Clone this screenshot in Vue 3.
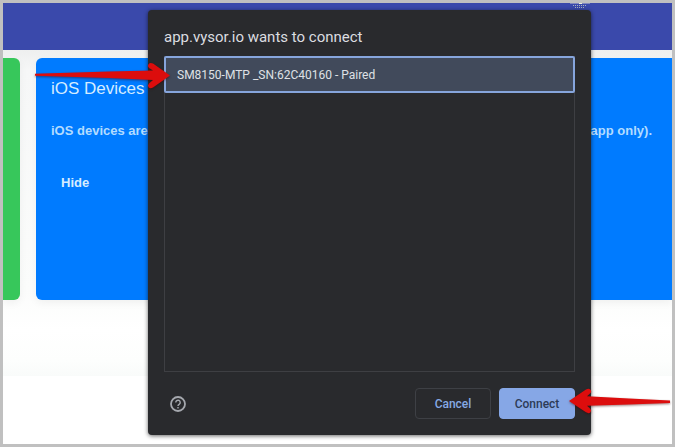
<script setup>
import { ref } from 'vue'

const devices = ref([{ id: 1, label: 'SM8150-MTP _SN:62C40160 - Paired' }])
const selected = ref(1)
</script>

<template>
  <div class="frame">
    <header class="topbar"></header>
    <main class="cards">
      <section class="card card-green"></section>
      <section class="card card-blue">
        <h2>iOS Devices</h2>
        <p><span>iOS devices are</span><span>app only).</span></p>
        <button type="button" class="hide">Hide</button>
      </section>
    </main>
    <div class="footer"></div>

    <svg class="spark" viewBox="0 0 20 6" aria-hidden="true">
      <path d="M0 .5H20" stroke="#8389bd" />
      <path d="M3 2.5H17M5 4.5H15" stroke="#a9b1bd" stroke-dasharray="1 1" />
      <path d="M9 .5h3" stroke="#eef0da" />
    </svg>

    <div class="dialog" role="dialog" aria-labelledby="dialog-title">
      <h1 id="dialog-title">app.vysor.io wants to connect</h1>
      <div class="list">
        <button
          v-for="d in devices"
          :key="d.id"
          type="button"
          class="device"
          :class="{ selected: d.id === selected }"
          @click="selected = d.id"
        >{{ d.label }}</button>
      </div>
      <div class="actions">
        <button type="button" class="help" aria-label="Help">
          <svg viewBox="0 0 16 16" fill="none" stroke="#a5a8ae">
            <circle cx="8" cy="8" r="7" stroke-width="1.8" />
            <path d="M5.8 6.5a2.2 2.2 0 1 1 3.5 1.7C8.5 8.8 8 9.1 8 10" stroke-width="1.4" />
            <path d="M8 11.1v1.4" stroke-width="1.4" />
          </svg>
        </button>
        <button type="button" class="btn cancel">Cancel</button>
        <button type="button" class="btn connect">Connect</button>
      </div>
    </div>

    <svg class="arrow arrow-left" viewBox="0 0 136 28" aria-hidden="true">
      <path d="M1 12.7 75 10.5 119 9.500 115 7Q113 5 114.5 3.2Q116 1.200 119 2.500L136 14.5 119 26.500Q116 28 114.5 26.200Q113 24.5 115 22.5L119 19 75 17 1 14.8Z" />
    </svg>
    <svg class="arrow arrow-right" viewBox="0 0 102 28" aria-hidden="true">
      <path d="M0 14 17 2.500Q20 1 21.5 2.8Q23 5 21 6.5L18 9.200 60 11.500 101 13.5V16L60 17.500 18 18.700 21 21.5Q23 23.500 21.5 25.200Q20 27 17 25.300Z" />
    </svg>
  </div>
</template>

<style>
body {
  background: #fff;
}
</style>

<style scoped>
.frame {
  position: relative;
  box-sizing: border-box;
  min-height: 100vh;
  display: flex;
  flex-direction: column;
  border: 3px solid #c0c0c0;
  overflow: hidden;
  font-family: "Liberation Sans", Arial, sans-serif;
}
button {
  font: inherit;
  margin: 0;
  padding: 0;
  border: 0;
  background: none;
  cursor: pointer;
}
.topbar {
  height: 47px;
  background: #3a49ab;
}
.cards {
  display: flex;
  gap: 16px;
  padding: 8px 0 76px;
  background: linear-gradient(#eeefef, #f6f7f7 20px, #fbfcfb 240px, #fff 280px, #fdfefd 310px, #f9fbfa);
}
.card {
  box-sizing: border-box;
  min-height: 242px;
  box-shadow: 0 3px 8px rgba(0, 0, 0, 0.05);
}
.card-green {
  width: 17px;
  background: #37c75b;
  border-radius: 0 6px 6px 0;
}
.card-blue {
  flex: 1;
  padding: 21px 20px 16px 15px;
  background: #007bff;
  border-radius: 6px 0 0 6px;
  color: #b3dcff;
}
h2 {
  margin: 0;
  font-size: 17px;
  line-height: 20px;
  font-weight: 400;
  color: #d5ecff;
}
.card-blue p {
  display: flex;
  justify-content: space-between;
  margin: 24px 0 0;
  font-size: 13px;
  line-height: 16px;
  font-weight: 700;
}
.hide {
  display: block;
  margin: 36px 0 0 10px;
  font-size: 13px;
  line-height: 16px;
  font-weight: 700;
  color: #d5ecff;
}
.footer {
  flex: 1;
  background: #fff;
}
.spark {
  position: absolute;
  top: 0;
  right: 82px;
  width: 20px;
  height: 6px;
}
.dialog {
  position: absolute;
  top: 7px;
  right: 81px;
  bottom: 9px;
  left: 145px;
  box-sizing: border-box;
  display: flex;
  flex-direction: column;
  padding: 16px;
  border-radius: 4px;
  background: #292a2d;
  box-shadow: 0 1px 4px rgba(0, 0, 0, 0.6);
  font-family: Roboto, sans-serif;
}
h1 {
  margin: 0 0 8px;
  font-size: 15px;
  line-height: 22px;
  font-weight: 400;
  color: #dcdde0;
}
.list {
  flex: 1;
  display: flex;
  flex-direction: column;
  border: 1px solid #3e3f43;
  border-top: 0;
}
.device {
  height: 37px;
  margin: 0 -1px;
  padding: 0 11px;
  border: 2px solid #292a2d;
  border-radius: 2px;
  font-size: 12px;
  text-align: left;
  color: #dfe1e5;
}
.device.selected {
  background: #414a5b;
  border-color: #86a5dc;
}
.actions {
  display: flex;
  align-items: center;
  gap: 8px;
  margin-top: 16px;
}
.help {
  width: 16px;
  height: 16px;
  margin: 0 auto 0 6px;
}
.help svg {
  display: block;
}
.btn {
  box-sizing: border-box;
  width: 76px;
  height: 31px;
  border: 1px solid #3e4045;
  border-radius: 4px;
  font-size: 12px;
  font-weight: 500;
  color: #86a9e4;
}
.connect {
  background: #86a7e6;
  border-color: #86a7e6;
  color: #2d3b57;
}
.arrow {
  position: absolute;
  height: 28px;
  fill: #dc0d0d;
  filter: drop-shadow(0 1px 1px rgba(60, 0, 0, 0.5));
}
.arrow-left {
  top: 58px;
  left: 31px;
  width: 136px;
}
.arrow-right {
  right: 1px;
  bottom: 29px;
  width: 102px;
}
</style>
